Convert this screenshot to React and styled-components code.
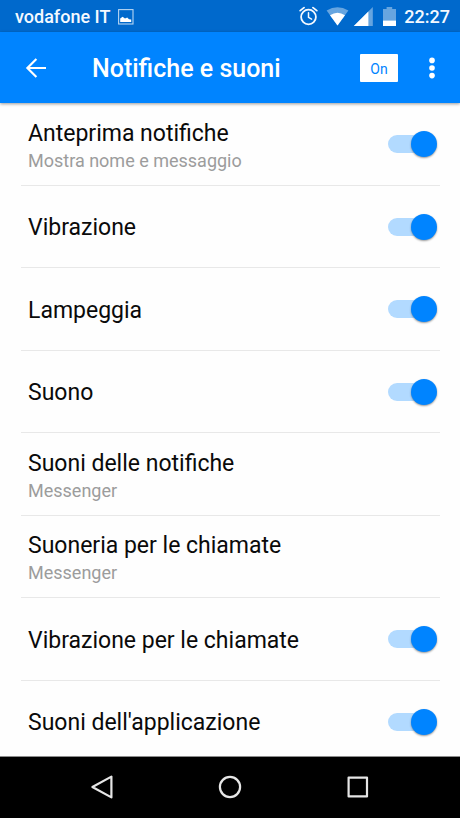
import React, { useState } from "react";
import styled, { createGlobalStyle } from "styled-components";

const GlobalStyle = createGlobalStyle`
  *, *::before, *::after { box-sizing: border-box; }
  body {
    margin: 0;
    background: #fefefe;
    font-family: Roboto, "Liberation Sans", sans-serif;
  }
`;

const Screen = styled.div`
  display: flex;
  flex-direction: column;
  height: 100vh;
  overflow: hidden;
`;

const StatusBar = styled.div`
  flex: none;
  display: flex;
  align-items: center;
  justify-content: space-between;
  height: 32px;
  padding: 1px 10px 0 15px;
  background: #0069cc;
  color: #f4f9ff;
  font-size: 18px;
  font-weight: 500;
  line-height: 30px;
`;

const Carrier = styled.div`
  display: flex;
  align-items: center;
  gap: 8px;
`;

const StatusIcons = styled.div`
  display: flex;
  align-items: center;
`;

const Clock = styled.time`
  margin-left: 7px;
`;

const AppBar = styled.header`
  flex: none;
  z-index: 1;
  display: flex;
  align-items: center;
  height: 71px;
  padding: 0 12px 0 20px;
  background: #0084ff;
  color: #fff;
  box-shadow: 0 1px 3px rgba(0, 0, 0, 0.4);
`;

const IconButton = styled.button`
  display: flex;
  align-items: center;
  justify-content: center;
  width: 32px;
  height: 40px;
  padding: 0;
  border: 0;
  background: none;
  color: inherit;
  cursor: pointer;
`;

const Title = styled.h1`
  flex: 1;
  margin: 0 0 0 40px;
  padding-top: 3px;
  font-size: 25px;
  font-weight: 500;
  line-height: 32px;
  white-space: nowrap;
`;

const MasterToggle = styled.button`
  width: 38px;
  height: 28px;
  margin: 0 18px 0 0;
  padding: 2px 0 0;
  border: 0;
  border-radius: 1px;
  background: #fff;
  color: #0084ff;
  font: 400 14px/26px Roboto, "Liberation Sans", sans-serif;
  cursor: pointer;
`;

const Settings = styled.main`
  flex: 1;
  min-height: 0;
  padding: 0 20px 0 21px;
  overflow: hidden;
`;

const SettingItem = styled.div`
  display: flex;
  height: 83px;
  border-bottom: 1px solid #e8e8e8;

  &:nth-child(even) {
    height: 82px;
  }
`;

const SwitchRow = styled.label`
  flex: 1;
  display: flex;
  align-items: center;
  justify-content: space-between;
  padding: 0 3px 0 7px;
  cursor: pointer;
`;

const LinkRow = styled.button`
  flex: 1;
  display: flex;
  align-items: center;
  padding: 0 3px 0 7px;
  border: 0;
  background: none;
  font-family: inherit;
  text-align: left;
  cursor: pointer;
`;

const Labels = styled.span`
  display: flex;
  flex-direction: column;
  padding-top: 3px;
`;

const Name = styled.span`
  color: #0a0a0a;
  font-size: 23px;
  line-height: 30px;
`;

const Detail = styled.span`
  color: #9c9c9c;
  font-size: 18px;
  line-height: 24px;
`;

const Switch = styled.input.attrs({ type: "checkbox", role: "switch" })`
  appearance: none;
  flex: none;
  display: flex;
  align-items: center;
  width: 49px;
  height: 26px;
  margin: 0;
  border-radius: 13px;
  cursor: pointer;

  &::before {
    content: "";
    flex: none;
    width: 44px;
    height: 18px;
    border-radius: 9px;
    background: ${(p) => (p.checked ? "#b2daff" : "#c4c4c4")};
  }

  &::after {
    content: "";
    flex: none;
    width: 26px;
    height: 26px;
    margin-left: ${(p) => (p.checked ? "-21px" : "-44px")};
    border-radius: 50%;
    background: ${(p) => (p.checked ? "#0084ff" : "#f4f4f4")};
    box-shadow: 0 1px 2px rgba(0, 0, 0, 0.4);
  }
`;

const NavBar = styled.nav`
  flex: none;
  display: flex;
  align-items: center;
  justify-content: center;
  gap: 88px;
  height: 62px;
  padding-bottom: 1px;
  border-top: 1px solid #8c8c8c;
  background: #000;
  color: #e6e6e6;
`;

const NavButton = styled(IconButton)`
  width: 40px;
`;

const SETTINGS = [
  { name: "Anteprima notifiche", detail: "Mostra nome e messaggio", toggle: true },
  { name: "Vibrazione", toggle: true },
  { name: "Lampeggia", toggle: true },
  { name: "Suono", toggle: true },
  { name: "Suoni delle notifiche", detail: "Messenger" },
  { name: "Suoneria per le chiamate", detail: "Messenger" },
  { name: "Vibrazione per le chiamate", toggle: true },
  { name: "Suoni dell'applicazione", toggle: true },
];

function Setting({ name, detail, toggle }) {
  const [on, setOn] = useState(true);
  const labels = (
    <Labels>
      <Name>{name}</Name>
      {detail && <Detail>{detail}</Detail>}
    </Labels>
  );
  return (
    <SettingItem>
      {toggle ? (
        <SwitchRow>
          {labels}
          <Switch checked={on} onChange={() => setOn(!on)} />
        </SwitchRow>
      ) : (
        <LinkRow type="button">{labels}</LinkRow>
      )}
    </SettingItem>
  );
}

const PictureIcon = () => (
  <svg width="16" height="16" viewBox="0 0 16 16" aria-hidden="true">
    <rect x="0.6" y="0.6" width="14.4" height="14.4" fill="none" stroke="#b5d5f2" strokeWidth="1.1" />
    <path d="M2.2 13V9.5L4.6 7.8 7 9.6 9.2 8.6 11 10.2 13.2 10.4V13Z" fill="#fff" />
  </svg>
);

const StatusGlyphs = () => (
  <svg width="98" height="22" viewBox="0 0 98 22" aria-hidden="true">
    <g fill="none" stroke="#f4f9ff" strokeLinecap="round">
      <circle cx="9.5" cy="11" r="7.4" strokeWidth="1.8" />
      <path d="M9.5 6.8V11.4L12.6 13.2" strokeWidth="1.5" />
      <path d="M1.2 4.6L5 1.6M17.8 4.6L14 1.6" strokeWidth="1.8" />
    </g>
    <path d="M27.6 4.6Q38.5-2.2 49.4 4.6L38.5 19.4Z" fill="#66a5e0" />
    <path d="M31 9.2Q38.5 4.2 46 9.2L38.5 19.4Z" fill="#fff" />
    <path d="M73.8 1V20H54.8Z" fill="#66a5e0" />
    <path d="M69.4 5.4V20H54.8Z" fill="#fff" />
    <path d="M84 3H87.6V1H93.2V3H97V20H84Z" fill="#66a5e0" />
    <path d="M84 14.6H97V20H84Z" fill="#fff" />
  </svg>
);

const BackArrow = () => (
  <svg width="22" height="22" viewBox="0 0 22 22" fill="none" stroke="currentColor" strokeWidth="2.2" aria-hidden="true">
    <path d="M21 11H3M11.4 2L2.4 11L11.4 20" />
  </svg>
);

const Dots = () => (
  <svg width="6" height="22" viewBox="0 0 6 22" fill="currentColor" aria-hidden="true">
    <circle cx="3" cy="3.4" r="2.8" />
    <circle cx="3" cy="11" r="2.8" />
    <circle cx="3" cy="18.6" r="2.8" />
  </svg>
);

const NavIcon = ({ children }) => (
  <svg width="24" height="24" viewBox="0 0 24 24" fill="none" stroke="currentColor" strokeWidth="2.2" strokeLinejoin="round" aria-hidden="true">
    {children}
  </svg>
);

export default function App() {
  const [enabled, setEnabled] = useState(true);
  return (
    <Screen>
      <GlobalStyle />
      <StatusBar>
        <Carrier>
          vodafone IT
          <PictureIcon />
        </Carrier>
        <StatusIcons>
          <StatusGlyphs />
          <Clock>22:27</Clock>
        </StatusIcons>
      </StatusBar>
      <AppBar>
        <IconButton type="button" aria-label="Indietro">
          <BackArrow />
        </IconButton>
        <Title>Notifiche e suoni</Title>
        <MasterToggle type="button" aria-pressed={enabled} onClick={() => setEnabled(!enabled)}>
          {enabled ? "On" : "Off"}
        </MasterToggle>
        <IconButton type="button" aria-label="Altre opzioni">
          <Dots />
        </IconButton>
      </AppBar>
      <Settings>
        {SETTINGS.map((item) => (
          <Setting key={item.name} {...item} />
        ))}
      </Settings>
      <NavBar>
        <NavButton type="button" aria-label="Indietro">
          <NavIcon>
            <path d="M21.4 1.6V22.4L2.4 12Z" />
          </NavIcon>
        </NavButton>
        <NavButton type="button" aria-label="Home">
          <NavIcon>
            <circle cx="12" cy="12" r="10.1" />
          </NavIcon>
        </NavButton>
        <NavButton type="button" aria-label="App recenti">
          <NavIcon>
            <rect x="2.6" y="2.6" width="18.4" height="18.8" />
          </NavIcon>
        </NavButton>
      </NavBar>
    </Screen>
  );
}
